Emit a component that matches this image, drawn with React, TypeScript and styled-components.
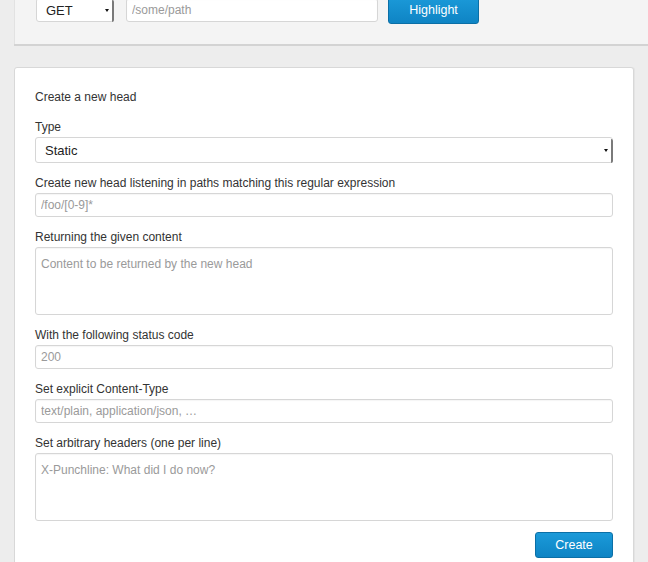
import React from "react";
import styled, { createGlobalStyle } from "styled-components";

const GlobalStyle = createGlobalStyle`
  html, body {
    margin: 0;
    padding: 0;
    background: #ededed;
    overflow: hidden;
  }
  body {
    font-family: "Liberation Sans", Arial, sans-serif;
    font-size: 12px;
    color: #333;
  }
  * { box-sizing: border-box; }
`;

const Page = styled.div`
  margin-top: -24px;
  padding-left: 14px;
`;

const TopPanel = styled.div`
  display: flex;
  align-items: center;
  margin-right: -40px;
  padding: 20px 21px;
  background: #f4f4f4;
  border-left: 1px solid #e2e2e2;
  box-shadow: 0 2px 0 #d3d3d3;
`;

const SelectBox = styled.div<{ $width?: string; $height: number; $pad: number }>`
  position: relative;
  width: ${p => p.$width || "100%"};
  height: ${p => p.$height}px;
  padding-left: ${p => p.$pad}px;
  display: flex;
  align-items: center;
  background: #fff;
  border: 1px solid #d6d6d6;
  border-radius: 3px;
  font-size: 13px;
  color: #222;
  &::after {
    content: "";
    position: absolute;
    right: -1px;
    top: 1px;
    bottom: -1px;
    width: 2px;
    background: #7a7a7a;
    border-radius: 0 2px 2px 0;
  }
`;

const Arrow = styled.span`
  position: absolute;
  right: 4px;
  top: 50%;
  margin-top: -1px;
  border-left: 2px solid transparent;
  border-right: 2px solid transparent;
  border-top: 3px solid #111;
`;

const Input = styled.input<{ $width?: string }>`
  display: block;
  width: ${p => p.$width || "100%"};
  height: 24px;
  padding: 0 5px;
  border: 1px solid #d6d6d6;
  border-radius: 3px;
  background: #fff;
  font-family: inherit;
  font-size: 12px;
  color: #333;
  box-shadow: inset 0 1px 1px rgba(0, 0, 0, 0.04);
  &::placeholder { color: #9a9a9a; }
`;

const TextArea = styled.textarea`
  display: block;
  width: 100%;
  height: 68px;
  padding: 8px 5px;
  border: 1px solid #d6d6d6;
  border-radius: 3px;
  background: #fff;
  font-family: inherit;
  font-size: 12px;
  line-height: 17px;
  color: #333;
  box-shadow: inset 0 1px 1px rgba(0, 0, 0, 0.04);
  &::placeholder { color: #9a9a9a; }
  &::-webkit-resizer { background: transparent; }
`;

const Button = styled.button<{ $width: number; $height: number }>`
  width: ${p => p.$width}px;
  height: ${p => p.$height}px;
  border: 1px solid #0b6fa6;
  border-radius: 3px;
  background: linear-gradient(#1b9ad9, #0e84c4);
  color: #fff;
  font-family: inherit;
  font-size: 12.5px;
  padding: 0;
`;

const Card = styled.div`
  width: 620px;
  margin-top: 23px;
  padding: 20px 20px 40px;
  background: #fff;
  border: 1px solid #d8d8d8;
  border-radius: 3px;
  box-shadow: 1px 0 0 #e4e4e4;
`;

const Heading = styled.div`
  line-height: 17px;
  padding-top: 1px;
  margin-bottom: 12px;
`;

const Group = styled.div`
  margin-bottom: 11px;
`;

const Label = styled.label`
  display: block;
  line-height: 17px;
  padding-top: 1px;
  margin-bottom: 1px;
`;

const Actions = styled.div`
  display: flex;
  justify-content: flex-end;
`;

export default function App() {
  return (
    <>
      <GlobalStyle />
      <Page>
        <TopPanel>
          <SelectBox $width="78px" $height={24} $pad={9}>
            GET
            <Arrow />
          </SelectBox>
          <Input $width="252px" placeholder="/some/path" style={{ marginLeft: 12 }} />
          <Button $width={91} $height={28} style={{ marginLeft: 10 }}>Highlight</Button>
        </TopPanel>
        <Card>
          <Heading>Create a new head</Heading>
          <Group>
            <Label>Type</Label>
            <SelectBox $height={26} $pad={9}>
              Static
              <Arrow />
            </SelectBox>
          </Group>
          <Group>
            <Label>Create new head listening in paths matching this regular expression</Label>
            <Input placeholder="/foo/[0-9]*" />
          </Group>
          <Group>
            <Label>Returning the given content</Label>
            <TextArea placeholder="Content to be returned by the new head" />
          </Group>
          <Group>
            <Label>With the following status code</Label>
            <Input placeholder="200" />
          </Group>
          <Group>
            <Label>Set explicit Content-Type</Label>
            <Input placeholder="text/plain, application/json, …" />
          </Group>
          <Group>
            <Label>Set arbitrary headers (one per line)</Label>
            <TextArea placeholder="X-Punchline: What did I do now?" />
          </Group>
          <Actions>
            <Button $width={78} $height={26}>Create</Button>
          </Actions>
        </Card>
      </Page>
    </>
  );
}
